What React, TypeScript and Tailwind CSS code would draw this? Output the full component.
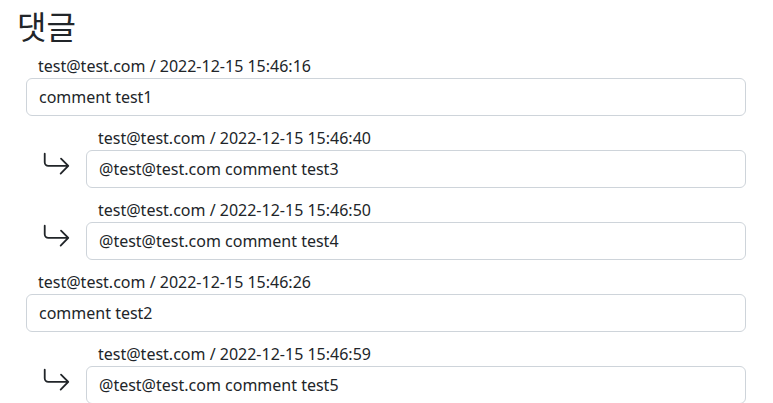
type Comment = {
  author: string;
  date: string;
  text: string;
  reply?: boolean;
};

const comments: Comment[] = [
  { author: 'test@test.com', date: '2022-12-15 15:46:16', text: 'comment test1' },
  { author: 'test@test.com', date: '2022-12-15 15:46:40', text: '@test@test.com comment test3', reply: true },
  { author: 'test@test.com', date: '2022-12-15 15:46:50', text: '@test@test.com comment test4', reply: true },
  { author: 'test@test.com', date: '2022-12-15 15:46:26', text: 'comment test2' },
  { author: 'test@test.com', date: '2022-12-15 15:46:59', text: '@test@test.com comment test5', reply: true },
];

function ReplyArrow() {
  return (
    <svg xmlns="http://www.w3.org/2000/svg" viewBox="0 0 16 16" className="size-[29px] text-[#212529]">
      <path
        fillRule="evenodd"
        fill="currentColor"
        d="M1.5 1.5A.5.5 0 0 0 1 2v4.8a2.5 2.5 0 0 0 2.5 2.5h9.793l-3.347 3.346a.5.5 0 0 0 .708.708l4.2-4.2a.5.5 0 0 0 0-.708l-4-4a.5.5 0 0 0-.708.708L13.293 8.3H3.5A1.5 1.5 0 0 1 2 6.8V2a.5.5 0 0 0-.5-.5z"
      />
    </svg>
  );
}

function CommentBody({ c }: { c: Comment }) {
  return (
    <div className="flex-1">
      <div className="h-6 px-3 leading-6">
        {c.author} / {c.date}
      </div>
      <div className="h-[38px] rounded-md border border-[#ced4da] bg-white px-3 leading-9">{c.text}</div>
    </div>
  );
}

export default function App() {
  return (
    <div
      className="min-h-screen bg-white text-base text-[#212529]"
      style={{ fontFamily: '"Noto Sans", "Noto Sans CJK KR", sans-serif' }}
    >
      <h2 className="mb-[3px] pt-[3px] pl-[17px] text-[32px] leading-[48px] font-normal">댓글</h2>
      <div className="flex flex-col gap-[10px] pr-[27px] pl-[26px]">
        {comments.map((c, i) =>
          c.reply ? (
            <div key={i} className="flex">
              <div className="flex w-[60px] justify-center pt-6">
                <ReplyArrow />
              </div>
              <CommentBody c={c} />
            </div>
          ) : (
            <div key={i} className="flex">
              <CommentBody c={c} />
            </div>
          ),
        )}
      </div>
    </div>
  );
}
